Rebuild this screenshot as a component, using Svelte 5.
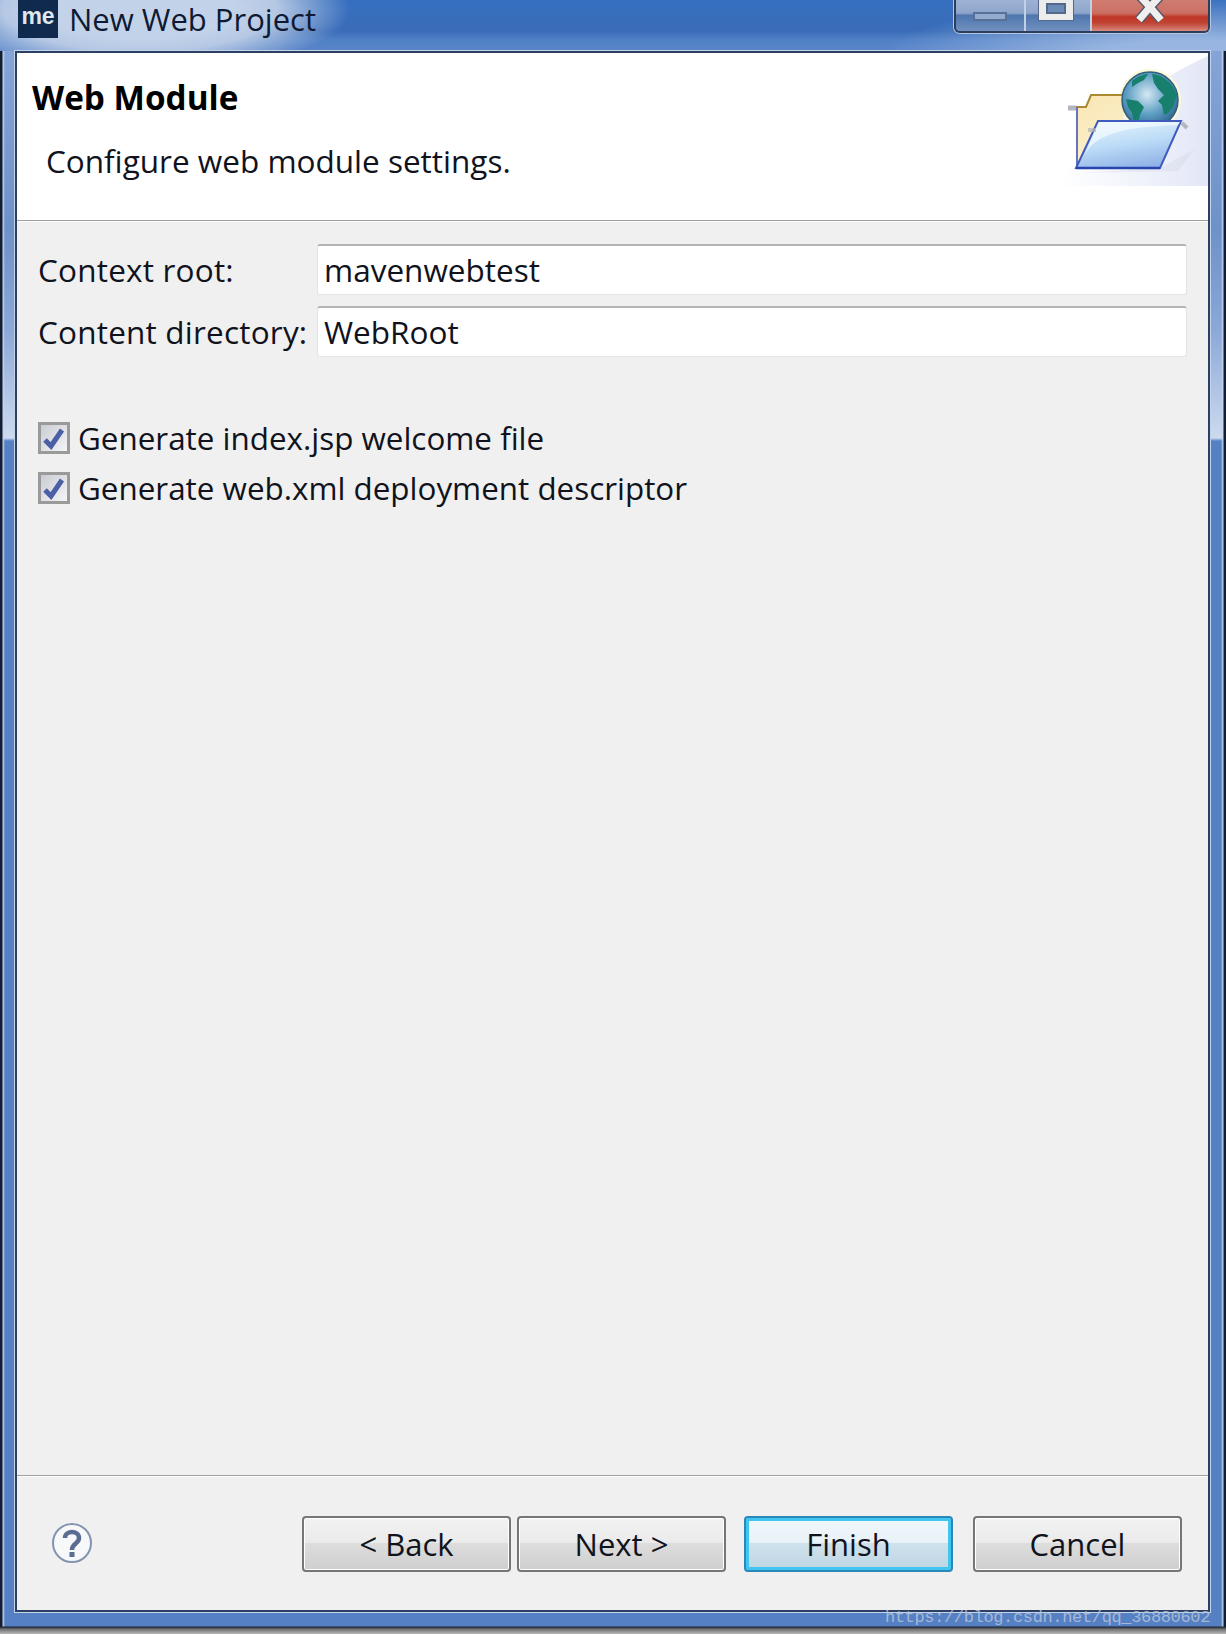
<script>
	const buttons = [
		{ label: '< Back', gap: 6 },
		{ label: 'Next >', gap: 18 },
		{ label: 'Finish', gap: 20, primary: true },
		{ label: 'Cancel', gap: 0 }
	];
	const options = ['Generate index.jsp welcome file', 'Generate web.xml deployment descriptor'];
</script>

<div class="window">
	<div class="titlebar">
		<div class="app-icon">me</div>
		<span class="title">New Web Project</span>
		<div class="controls">
			<div class="ctl min"><span class="min-glyph"></span></div>
			<div class="ctl max"><span class="max-glyph"></span></div>
			<div class="ctl close">
				<svg width="44" height="24" viewBox="0 0 44 24">
					<path d="M10 -6 L22 7 L34 -6 M22 7 L11 20 M22 7 L33 20" fill="none" stroke="#555a66" stroke-width="10" />
					<path d="M10 -6 L22 7 L34 -6 M22 7 L11 20 M22 7 L33 20" fill="none" stroke="#efefef" stroke-width="7" />
				</svg>
			</div>
		</div>
	</div>

	<div class="dialog">
		<header class="banner">
			<div class="banner-text">
				<h1>Web Module</h1>
				<p>Configure web module settings.</p>
			</div>
			<svg class="wizard-icon" width="148" height="133" viewBox="0 0 148 133">
				<defs>
					<linearGradient id="wash" x1="0" y1="0" x2="1" y2="0">
						<stop offset="0" stop-color="#fff" />
						<stop offset="0.55" stop-color="#f0f3fb" />
						<stop offset="1" stop-color="#e3e7f6" />
					</linearGradient>
					<linearGradient id="back" x1="0" y1="0" x2="0.4" y2="1">
						<stop offset="0" stop-color="#f8e5b2" />
						<stop offset="1" stop-color="#fdf1cf" />
					</linearGradient>
					<linearGradient id="front" x1="0.25" y1="0" x2="0.6" y2="1">
						<stop offset="0" stop-color="#e4f2fd" />
						<stop offset="0.5" stop-color="#bcdcf7" />
						<stop offset="1" stop-color="#8fb2e6" />
					</linearGradient>
					<radialGradient id="sea" cx="0.45" cy="0.4" r="0.65">
						<stop offset="0" stop-color="#d5e8f3" />
						<stop offset="0.55" stop-color="#5f9fc4" />
						<stop offset="1" stop-color="#2a5f8c" />
					</radialGradient>
				</defs>
				<path d="M148 3 C110 20 40 60 0 133 H148 Z" fill="url(#wash)" />
				<path d="M100 115 L135 96 L118 118 L20 120 Z" fill="#c9cbe0" opacity="0.28" />
				<circle cx="90" cy="47" r="31" fill="#fdf8d8" />
				<path d="M8 55 H16" stroke="#b5b5bd" stroke-width="5" />
				<path d="M16 54 H26 L31 42 H64 V115 H16 Z" fill="url(#back)" />
				<path d="M16 54 H26 L31 42 H64" fill="none" stroke="#a98a32" stroke-width="2" />
				<path d="M17 54 V116" stroke="#6673c0" stroke-width="2" />
				<circle cx="90" cy="47" r="28" fill="url(#sea)" stroke="#2f5f7c" stroke-width="1.5" />
				<path d="M72 28 C78 23 84 21 88 21 L84 27 L78 30 L72 34 Z M92 21 C104 22 112 30 117 42 L113 54 L108 60 L104 62 L102 52 L98 48 L104 42 L98 36 L94 30 Z M66 46 L78 48 L84 54 L80 62 L78 70 L74 70 L72 60 L68 54 Z" fill="#16806c" />
				<path d="M38 68 H121 L100 115 H16 Z" fill="url(#front)" stroke="#3f5bbd" stroke-width="2" />
				<path d="M24 103 C34 84 54 74 118 72 L120 69 H39 Z" fill="#f2f9ff" opacity="0.75" />
				<path d="M16 115 H100" stroke="#2745ae" stroke-width="2.5" />
				<path d="M122 70 L127 75" stroke="#b5b5bd" stroke-width="4" />
				<path d="M28 77 H36" stroke="#b5b5bd" stroke-width="4" opacity="0.7" />
			</svg>
		</header>
		<div class="rule"></div>

		<main class="body">
			<div class="fields">
				<span class="lbl">Context root:</span>
				<div class="input">mavenwebtest</div>
				<span class="lbl">Content directory:</span>
				<div class="input">WebRoot</div>
			</div>
			<div class="options">
				{#each options as text}
					<div class="option">
						<span class="check">
							<svg width="24" height="24" viewBox="0 0 24 24">
								<path d="M3 14 L9 20 L20 4" fill="none" stroke="#4a5fa5" stroke-width="5" />
							</svg>
						</span>
						<span>{text}</span>
					</div>
				{/each}
			</div>
		</main>

		<div class="rule"></div>
		<footer class="footer">
			<svg class="help" width="42" height="42" viewBox="0 0 42 42">
				<circle cx="21" cy="21" r="19" fill="#f7f8fa" stroke="#8494b0" stroke-width="2" />
				<path d="M14 16 C14 8 28 8 28 16 C28 22 21 21 21 28" fill="none" stroke="#5a6d90" stroke-width="4.5" />
				<rect x="18.5" y="30" width="5" height="5" fill="#5a6d90" />
			</svg>
			<div class="actions">
				{#each buttons as b}
					<div class="btn" class:primary={b.primary} style="margin-right: {b.gap}px">{b.label}</div>
				{/each}
			</div>
		</footer>
	</div>
	<span class="watermark">https://blog.csdn.net/qq_36880602</span>
</div>

<style>
	:global(body) {
		margin: 0;
	}

	.window {
		position: relative;
		box-sizing: border-box;
		width: 1226px;
		height: 1634px;
		display: flex;
		flex-direction: column;
		padding: 0 16px 22px 15px;
		font-family: 'Open Sans', 'Noto Sans', sans-serif;
		color: #10131c;
		background:
			linear-gradient(to bottom, #55555500 1626px, #1d2433 1627px, #6e6e6e 1629px, #b8b8b8 1634px),
			linear-gradient(to right, #141e33 2px, #c3d4ee 3px, transparent 5px, transparent 1221px, #c3d4ee 1223px, #141e33 1224px),
			linear-gradient(to bottom, #85a5d8 50px, #6d91c9 230px, #8ba8d8 330px, #cddaef 438px, #5580c4 441px, #5580c4 1627px);
	}

	.titlebar {
		height: 51px;
		margin: 0 -16px 0 -15px;
		display: flex;
		align-items: flex-start;
		padding-left: 18px;
		background:
			radial-gradient(ellipse 310px 60px at 1190px 58px, #97b5e0 30%, #97b5e000 100%),
			radial-gradient(ellipse 210px 64px at 140px 10px, #c2d2e9 45%, #b5c8e4 65%, #c2d2e900 100%),
			linear-gradient(to bottom, #366fbf 0, #3a6cb8 31px, #5080c6 40px, #5b85c9 51px);
		flex-shrink: 0;
	}

	.app-icon {
		width: 40px;
		height: 38px;
		background: #0f2a4d;
		color: #dfe6ee;
		font: bold 23px/32px 'Liberation Sans', sans-serif;
		text-align: center;
	}

	.title {
		margin-left: 11px;
		font-size: 31px;
		line-height: 38px;
		color: #0e1a33;
	}

	.controls {
		margin-left: auto;
		margin-right: 16px;
		display: flex;
		height: 31px;
		border: 2px solid #2c3e5c;
		border-top: 0;
		border-radius: 0 0 6px 6px;
		overflow: hidden;
		box-shadow: 0 0 0 1px #b4c6e2;
	}

	.ctl {
		display: flex;
		justify-content: center;
		align-items: flex-start;
		background: linear-gradient(to bottom, #9db2d4 0, #8fa6cb 42%, #4e76ae 50%, #7191bf 100%);
		border-right: 2px solid #c2d0e6;
	}

	.min {
		width: 68px;
	}

	.max {
		width: 64px;
	}

	.close {
		width: 116px;
		border-right: 0;
		background: linear-gradient(to bottom, #d07c72 0, #cc6f63 42%, #bf3526 55%, #c04534 75%, #d98a7f 100%);
	}

	.min-glyph {
		box-sizing: border-box;
		width: 34px;
		height: 9px;
		margin-top: 12px;
		background: #94abd0;
		border: 2px solid #5a6f96;
	}

	.max-glyph {
		box-sizing: border-box;
		width: 36px;
		height: 27px;
		margin: -6px 4px 0 0;
		display: block;
		background: #ececec;
		border: 1px solid #55678a;
		position: relative;
	}

	.max-glyph::after {
		content: '';
		position: absolute;
		left: 7px;
		right: 7px;
		top: 8px;
		height: 11px;
		background: #6a8ab8;
		border: 2px solid #55678a;
		box-sizing: border-box;
	}

	.close svg {
		display: block;
	}

	.dialog {
		flex: 1;
		display: flex;
		flex-direction: column;
		background: #f0f0f0;
		border: 2px solid #2c4063;
		box-shadow: 0 0 0 1px #c3d3ea;
		min-height: 0;
	}

	.banner {
		position: relative;
		height: 167px;
		background: #fff;
		flex-shrink: 0;
	}

	.banner-text {
		padding: 22px 0 0 15px;
	}

	h1 {
		margin: 0;
		font-size: 33.3px;
		font-weight: 700;
		line-height: 44px;
		color: #000;
	}

	.banner p {
		margin: 22px 0 0 14px;
		font-size: 31.5px;
		line-height: 40px;
		color: #10131c;
	}

	.wizard-icon {
		position: absolute;
		right: 0;
		top: 0;
	}

	.rule {
		height: 2px;
		flex-shrink: 0;
		background: linear-gradient(to bottom, #a0a0a0 50%, #fff 50%);
	}

	.body {
		flex: 1;
		padding: 22px 21px 0 21px;
	}

	.fields {
		display: grid;
		grid-template-columns: 279px 1fr;
		row-gap: 11px;
		align-items: center;
	}

	.lbl {
		font-size: 31.5px;
		line-height: 40px;
		letter-spacing: 0.2px;
	}

	.input {
		box-sizing: border-box;
		height: 51px;
		padding-left: 6px;
		background: #fff;
		border: 1px solid #e2e4ea;
		border-top: 2px solid #b4b4b4;
		border-radius: 3px;
		font-size: 31.5px;
		line-height: 47px;
	}

	.options {
		margin-top: 65px;
		display: flex;
		flex-direction: column;
		gap: 18px;
	}

	.option {
		display: flex;
		align-items: center;
		gap: 8px;
		height: 32px;
		font-size: 31.4px;
		line-height: 30px;
	}

	.check {
		box-sizing: border-box;
		width: 32px;
		height: 32px;
		display: flex;
		align-items: center;
		justify-content: center;
		border: 3px solid #9a9a9a;
		background: linear-gradient(135deg, #c9ccd3, #f4f5f7);
	}

	.footer {
		box-sizing: border-box;
		flex-shrink: 0;
		height: 133px;
		display: flex;
		align-items: flex-start;
		justify-content: space-between;
		padding: 39px 26px 0 34px;
	}

	.help {
		margin-top: 6px;
	}

	.actions {
		display: flex;
	}

	.btn {
		box-sizing: border-box;
		width: 209px;
		height: 56px;
		display: flex;
		align-items: center;
		justify-content: center;
		border: 2px solid #767676;
		border-radius: 4px;
		box-shadow: inset 0 0 0 1px #fff;
		background: linear-gradient(to bottom, #f2f2f2 0, #ebebeb 47%, #dddddd 48%, #cfcfcf 100%);
		font-size: 31px;
	}

	.primary {
		border-color: #2c86b8;
		box-shadow: inset 0 0 0 3px #3fc6f0;
		background: linear-gradient(to bottom, #f1f7fb 0, #e9f2f8 47%, #cfe2ec 48%, #bdd5e2 100%);
	}

	.watermark {
		position: absolute;
		right: 16px;
		bottom: 7px;
		font: 17px 'Liberation Mono', monospace;
		letter-spacing: -0.35px;
		color: #b9c6da;
		opacity: 0.8;
	}
</style>
